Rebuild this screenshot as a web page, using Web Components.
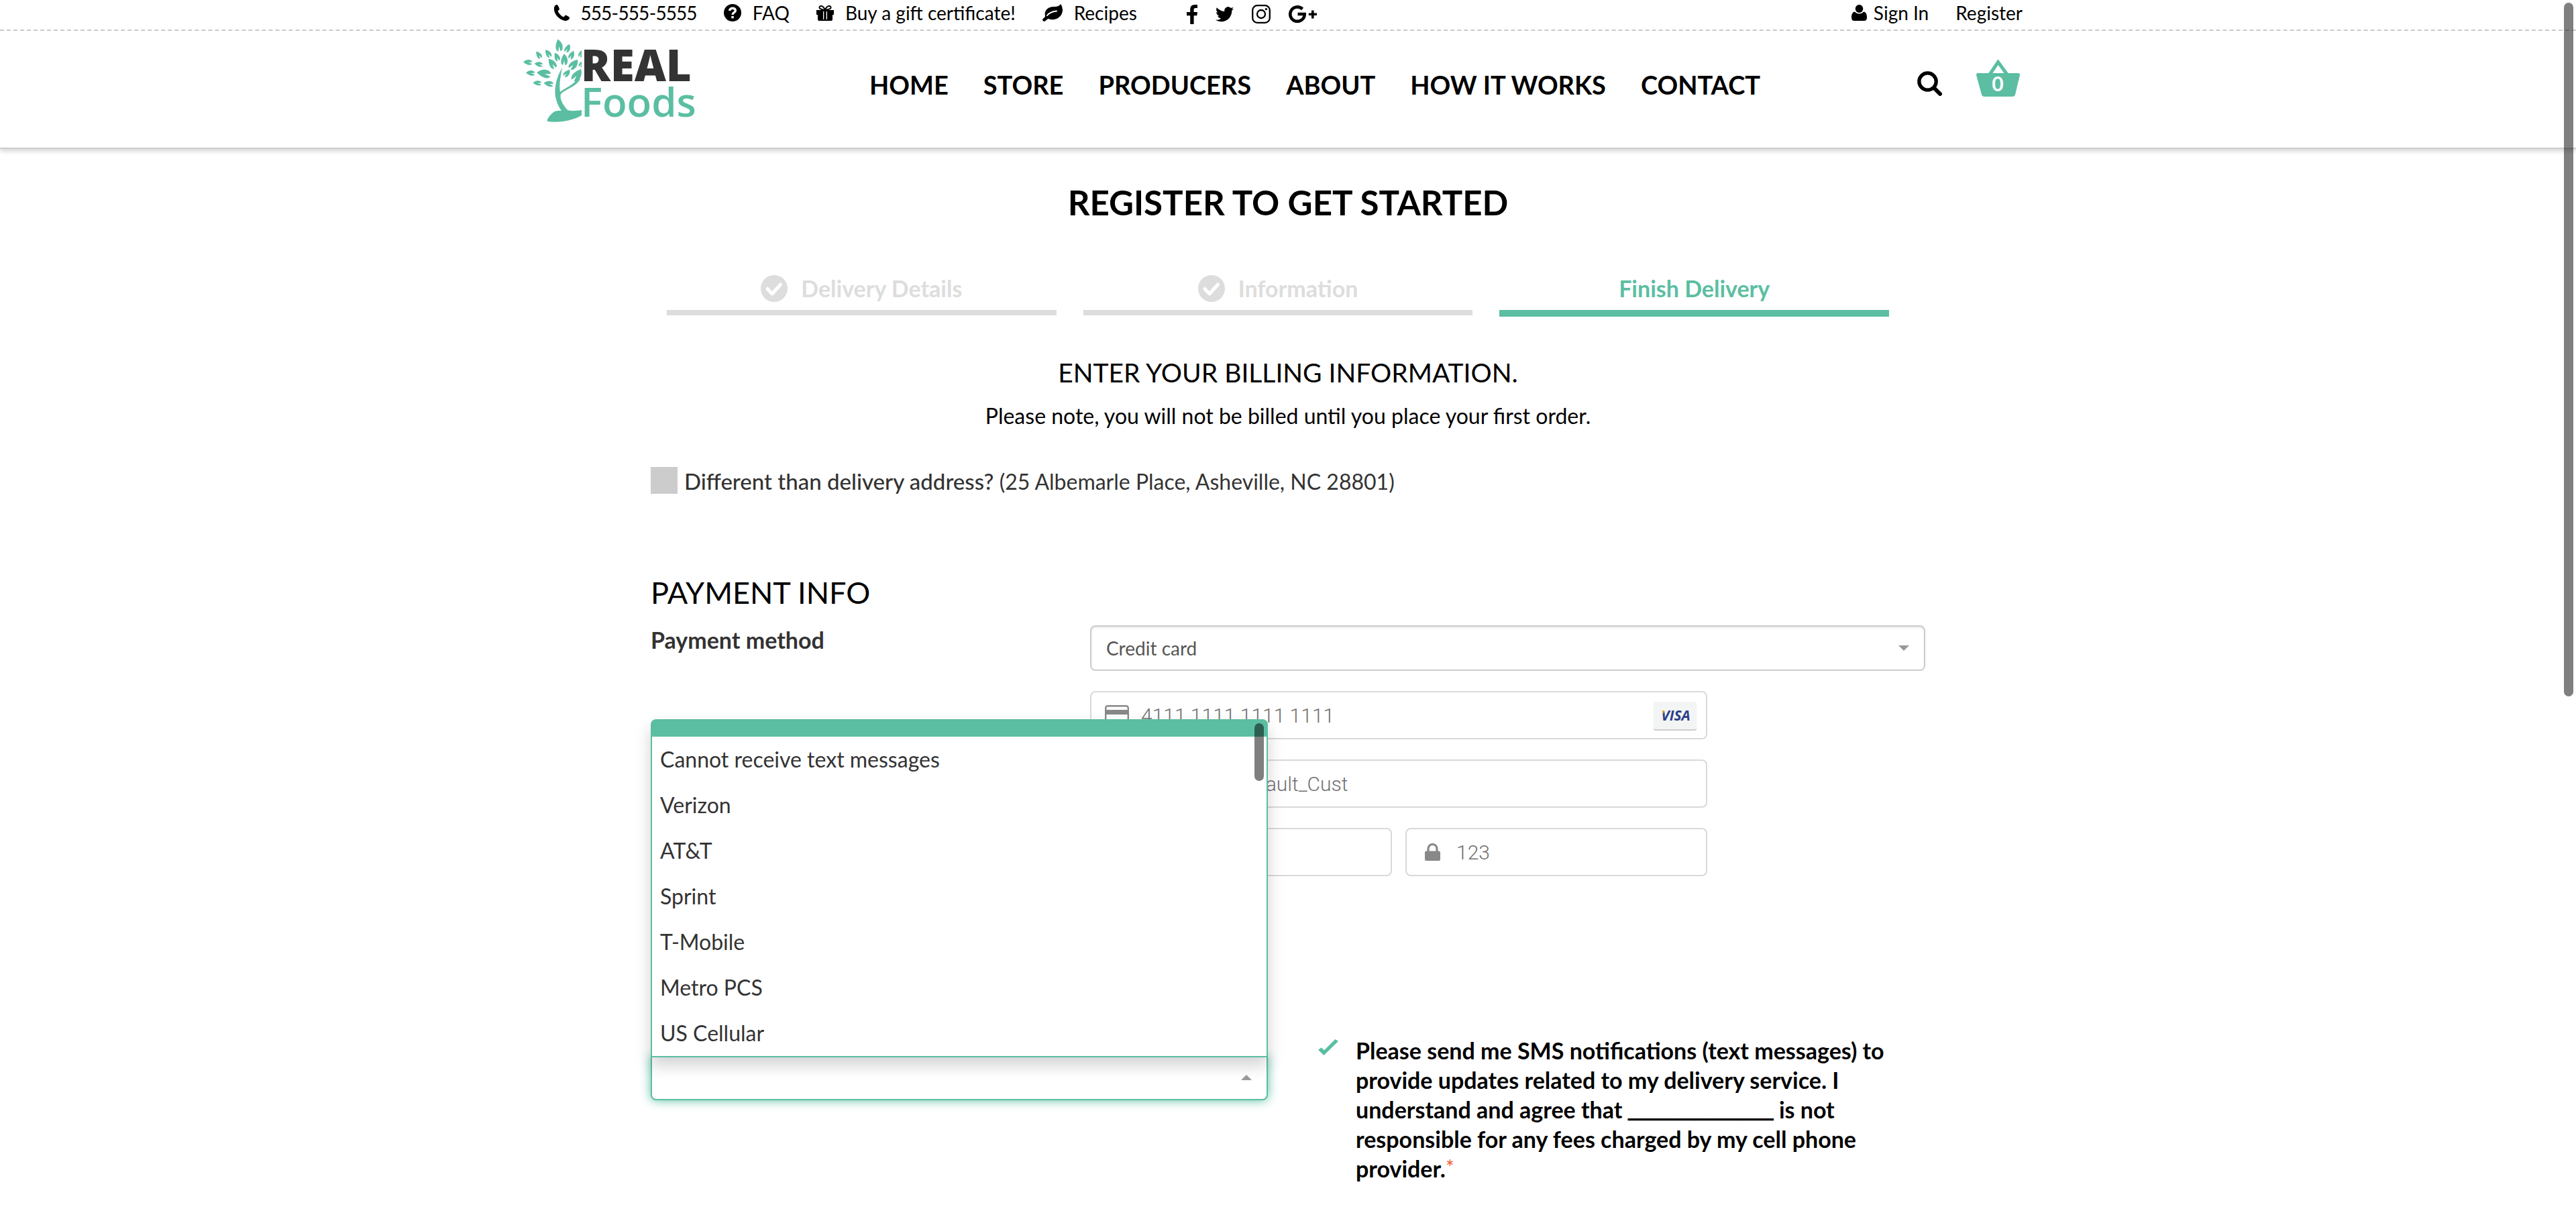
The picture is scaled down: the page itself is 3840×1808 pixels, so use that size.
<!DOCTYPE html>
<html lang="en">
<head>
<meta charset="utf-8">
<title>Real Foods - Register</title>
<style>
  html { --green: #5bbea2; --muted: #ddd; --line: #ccc; --ink: #333; }
  body { margin: 0; background: #fff; color: #000; font-family: Lato, "Open Sans", sans-serif; font-size: 32px; line-height: 44px; overflow: hidden; }
</style>
</head>
<body>
<site-page></site-page>
<script>
const define = (name, html, after) => {
  const template = document.createElement('template');
  template.innerHTML = html;
  customElements.define(name, class extends HTMLElement {
    constructor() {
      super();
      this.attachShadow({ mode: 'open' }).append(template.content.cloneNode(true));
    }
    connectedCallback() { if (after) after(this, this.shadowRoot); }
  });
};

const icons = {
  phone: [24, 24, '<path d="M1 5C0 14 10 24 19 24C23 23 24 21 24 19C22 17 20 16 18 15.500L15 18.500C11 16.500 8 13 6.500 9.500L9 7C8.500 4 7 1.500 5.500 0C3 0 1 2 1 5Z"/>'],
  help: [26, 26, '<circle cx="13" cy="13" r="13"/><path d="M8.500 10C9 5 17.500 5 17.300 10C17 13 13 12.500 13 16" fill="none" stroke="#fff" stroke-width="3.400"/><path d="M11.300 18h3.500v3.300h-3.500z" fill="#fff"/>'],
  gift: [26, 24, '<path d="M0 8h10v7H0zM16 8h10v7H16zM2 15h8v9H4q-2 0-2-2zM16 15h8v7q0 2-2 2h-6zM11.300 9h3.400v13h-3.400z"/><path d="M10 8h6v2h-6zM10 22h6v2h-6z"/><path d="M13 8C10 0 4 1 4.500 4.500C5 7 9 7 13 8C17 7 21 7 21.500 4.500C22 1 16 0 13 8Z" fill="none" stroke="#000" stroke-width="2"/>'],
  leaf: [30, 26, '<path d="M27 0C29 2 30 7 30 10C29 20 18 26 9 22C7 22 5 25 3 26C1 26 0 24 0 23C1 21 4 20 4 18C2 10 8 4 17 4C22 4 25 3 27 0Z"/><path d="M7 17C11 12 15 11 21 10.500" fill="none" stroke="#fff" stroke-width="2" stroke-linecap="round"/>'],
  facebook: [16, 29, '<path d="M16 .3V5h-2.800c-2.200 0-2.600 1-2.600 2.600V11H16l-.7 5.200h-4.700V29H5.200V16.200H0V11h5.200V7C5.200 2.500 8 0 12 0c2 0 3.500.1 4 .3z"/>'],
  twitter: [27, 24, '<path transform="scale(.0528) translate(0 -24)" d="M459.370 151.716c.325 4.548.325 9.097.325 13.645 0 138.720-105.583 298.558-298.558 298.558-59.452 0-114.680-17.219-161.137-47.106 8.447.974 16.568 1.299 25.340 1.299 49.055 0 94.213-16.568 130.274-44.832-46.132-.975-84.792-31.188-98.112-72.772 6.498.974 12.995 1.624 19.818 1.624 9.421 0 18.843-1.300 27.614-3.573-48.081-9.747-84.143-51.980-84.143-102.985v-1.299c13.969 7.797 30.214 12.670 47.431 13.319-28.264-18.843-46.781-51.005-46.781-87.391 0-19.492 5.197-37.360 14.294-52.954 51.655 63.675 129.300 105.258 216.365 109.807-1.624-7.797-2.599-15.918-2.599-24.040 0-57.828 46.782-104.934 104.934-104.934 30.213 0 57.502 12.670 76.670 33.137 23.715-4.548 46.456-13.320 66.599-25.340-7.798 24.366-24.366 44.833-46.132 57.827 21.117-2.273 41.584-8.122 60.426-16.243-14.292 20.791-32.161 39.308-52.628 54.253z"/>'],
  instagram: [28, 28, '<g fill="none" stroke="#000" stroke-width="2.300"><rect x="1.200" y="1.200" width="25.600" height="25.600" rx="7"/><circle cx="14" cy="14" r="6"/></g><circle cx="21.400" cy="6.600" r="1.700"/>'],
  google: [42, 26, '<path d="M20.500 5.500A10.700 10.700 0 1 0 23.700 13H13.500" fill="none" stroke="#000" stroke-width="4.600"/><path d="M34 7.500h3.600v4H42v3.500h-4.400v4.500H34V15h-4.200v-3.500H34z"/>'],
  user: [23, 24, '<ellipse cx="11.500" cy="6" rx="5.800" ry="6"/><path d="M5 10.500C8 14.500 15 14.500 18 10.500C22 11 23 15 23 19C23 22.500 21.500 24 19 24H4C1.500 24 0 22.500 0 19C0 15 1 11 5 10.500Z"/>'],
  search: [37, 37, '<circle cx="15.500" cy="15.500" r="12.700" fill="none" stroke="#000" stroke-width="5.300"/><path d="M25 25l9 9" stroke="#000" stroke-width="6" stroke-linecap="round"/>'],
  done: [40, 40, '<circle cx="20" cy="20" r="20" fill="#ddd"/><path d="M10 20.500l7 7.500L29.500 14" fill="none" stroke="#fff" stroke-width="5" stroke-linecap="round" stroke-linejoin="round"/>'],
  card: [36, 30, '<rect x="1.200" y="1.200" width="33.600" height="27.600" rx="3" fill="none" stroke="#888" stroke-width="2.400"/><path d="M1 7h34v7H1zM5 21h5v2H5zM12 21h6v2h-6z" fill="#888"/>'],
  lock: [23, 26, '<path d="M5 12V8a6.500 6.500 0 0 1 13 0v4" fill="none" stroke="#888" stroke-width="3.200"/><rect y="11.500" width="23" height="14.500" rx="2" fill="#888"/>'],
  calendar: [26, 26, '<rect x="1" y="3" width="24" height="22" rx="3" fill="none" stroke="#888" stroke-width="2.400"/><path d="M1 8h24v3H1z" fill="#888"/>']
};
define('site-icon', '<style>:host{display:block;flex:none}svg{display:block}</style>', (el, root) => {
  const [w, h, body] = icons[el.getAttribute('name')];
  root.innerHTML += `<svg width="${w}" height="${h}" viewBox="0 0 ${w} ${h}" aria-hidden="true">${body}</svg>`;
});

const leaf = (x, y, r, s) => `<path transform="translate(${x} ${y}) rotate(${r}) scale(${s})" d="M0-10C5-5 7 0 5 6C4 8 2.500 9 1.500 9L0 1L-2 9C-7 7-6-2 0-10Z"/>`;
define('site-logo', `
<style>
  :host { display: block; flex: none; width: 260px; }
  a, svg { display: block; }
  .mark { overflow: visible; }
  .real { font: 800 65px "Open Sans", sans-serif; fill: #333; }
  .foods { font: 600 60px "Open Sans", sans-serif; fill: var(--green); }
</style>
<a href="#" aria-label="Real Foods"><svg class="mark" width="260" height="132" viewBox="0 0 260 132">
  <svg width="87" height="132" viewBox="0 0 87 132"><g fill="#5bbea2">
    ${[[53, 10, -8, .95], [66, 14, 25, .7], [23, 24, -35, .65], [37, 22, -35, .7], [50, 27, -25, .7], [72, 24, 25, .7], [61, 31, 0, .9],
       [7, 35, -85, .7], [23, 38, -80, .65], [43, 37, -35, .9], [75, 38, 40, .95], [11, 51, -85, .7], [31, 52, -80, 1.1],
       [65, 51, 40, .7], [80, 54, 35, 1.1], [21, 66, -85, .65], [38, 67, -80, .75], [86, 22, 20, .6], [87, 37, 30, .6]].map(l => leaf(...l)).join('')}
    <path d="M58 43C49 58 46 74 48 86C50 96 54 103 57 107C50 107 47 107 43 111C38 116 35 120 36 123C50 125 72 123 87 114V106C80 107 72 108 66 106C59 98 54 90 56 82C64 74 78 72 85 60L82 58C76 68 64 72 55 79C53 68 56 54 58 43Z"/>
  </g></svg>
  <text class="real" x="86" y="63">REAL</text>
  <text class="foods" x="86" y="116">Foods</text>
</svg></a>`);

define('top-bar', `
<style>
  :host { display: block; font-size: 28px; line-height: 38px; font-variant-numeric: proportional-nums; border-bottom: 2px dashed var(--line); padding-bottom: 6px; }
  .row { max-width: 2190px; margin: 0 auto; display: flex; justify-content: space-between; }
  nav, a { display: flex; align-items: center; }
  nav { gap: 40px; }
  a { color: inherit; text-decoration: none; gap: 17px; white-space: nowrap; }
  .social { display: flex; align-items: center; gap: 27px; padding: 4px 0 0 34px; }
  .user { gap: 10px; }
</style>
<div class="row">
  <nav aria-label="Help">
    <a href="#"><site-icon name="phone"></site-icon>555-555-5555</a>
    <a href="#"><site-icon name="help"></site-icon>FAQ</a>
    <a href="#"><site-icon name="gift"></site-icon>Buy a gift certificate!</a>
    <a href="#"><site-icon name="leaf"></site-icon>Recipes</a>
    <span class="social">
      <a href="#" aria-label="Facebook"><site-icon name="facebook"></site-icon></a>
      <a href="#" aria-label="Twitter"><site-icon name="twitter"></site-icon></a>
      <a href="#" aria-label="Instagram"><site-icon name="instagram"></site-icon></a>
      <a href="#" aria-label="Google Plus"><site-icon name="google"></site-icon></a>
    </span>
  </nav>
  <nav aria-label="Account">
    <a class="user" href="#"><site-icon name="user"></site-icon>Sign In</a>
    <a href="#">Register</a>
  </nav>
</div>`);

define('site-header', `
<style>
  :host { display: block; border-bottom: 2px solid var(--line); box-shadow: 0 4px 6px rgba(0,0,0,.15); padding: 12px 0 30px; }
  .row { max-width: 2280px; margin: 0 auto; display: flex; align-items: center; }
  nav { display: flex; gap: 52px; margin-left: 256px; padding-top: 4px; font-size: 38px; font-weight: 700; line-height: 48px; }
  a { color: inherit; text-decoration: none; white-space: nowrap; }
  .tools { display: flex; align-items: center; gap: 51px; margin-left: auto; padding-right: 49px; }
  button { border: 0; padding: 0; background: none; display: block; }
  .basket text { font: 700 30px Lato, sans-serif; fill: #fff; text-anchor: middle; }
  svg { display: block; }
</style>
<div class="row">
  <site-logo></site-logo>
  <nav aria-label="Main">
    <a href="#">HOME</a><a href="#">STORE</a><a href="#">PRODUCERS</a><a href="#">ABOUT</a><a href="#">HOW IT WORKS</a><a href="#">CONTACT</a>
  </nav>
  <div class="tools">
    <button aria-label="Search"><site-icon name="search"></site-icon></button>
    <a class="basket" href="#" aria-label="Basket"><svg width="65" height="71" viewBox="0 0 65 71">
      <path d="M20 22L32.500 3.500L46 22" fill="none" stroke="#5bbea2" stroke-width="5"/>
      <path d="M2 20H63Q65 20 65 23L58 52Q57 55 54 55H12Q9 55 8 52L0 23Q0 20 2 20Z" fill="#5bbea2"/>
      <text x="32" y="47">0</text>
    </svg></a>
  </div>
</div>`);

define('step-item', `
<style>
  :host { display: flex; flex: 1; justify-content: center; align-items: center; gap: 20px; height: 40px; padding-bottom: 12px; border-bottom: 8px solid var(--muted); color: var(--muted); font-size: 34px; font-weight: 700; }
  :host([current]) { color: var(--green); border-bottom: 10px solid var(--green); }
  :host([current]) site-icon { display: none; }
</style>
<site-icon name="done"></site-icon><span><slot></slot></span>`);

define('step-tracker', `
<style>
  :host { display: flex; align-items: flex-start; gap: 40px; padding: 0 54px 0 24px; }
</style>
<step-item>Delivery Details</step-item><step-item>Information</step-item><step-item current>Finish Delivery</step-item>`);

define('card-field', `
<style>
  :host { display: flex; flex: 1; min-width: 0; align-items: center; box-sizing: border-box; height: 72px; padding: 0 14px 0 20px; border: 2px solid #d9d9d9; border-radius: 8px; gap: 18px; background: #fff; }
  .icon { width: 36px; display: flex; justify-content: center; }
  input { flex: 1; min-width: 0; border: 0; padding: 0; background: none; outline: 0; color: #707070; font: 300 30px Roboto, "Liberation Sans", sans-serif; }
</style>
<span class="icon"></span><input><slot></slot>`, (el, root) => {
  const name = el.getAttribute('icon');
  if (name) root.querySelector('.icon').innerHTML = `<site-icon name="${name}"></site-icon>`;
  const input = root.querySelector('input');
  input.setAttribute('aria-label', el.getAttribute('label'));
  input.setAttribute('value', el.getAttribute('value') || '');
});

define('visa-badge', `
<style>
  :host { display: block; flex: none; width: 64px; height: 41px; background: #f3f5f5; border-radius: 3px; box-shadow: 0 2px 1px #ccc; }
  svg { display: block; }
  text { font: italic 700 21px "Open Sans", sans-serif; text-anchor: middle; }
</style>
<svg width="64" height="41" viewBox="0 0 64 41">
  <defs><linearGradient id="visa" x1="0" y1="0" x2="1" y2="1"><stop offset="0" stop-color="#f0a23c"/><stop offset=".2" stop-color="#e0983c"/><stop offset=".26" stop-color="#2b3f87"/></linearGradient></defs>
  <text x="33" y="28" fill="url(#visa)">VISA</text>
</svg>`);

define('payment-form', `
<style>
  :host { display: flex; color: var(--ink); }
  .name { width: 655px; flex: none; font-size: 34px; font-weight: 700; }
  .fields { flex: 1; min-width: 0; display: flex; flex-direction: column; gap: 30px; }
  .method { position: relative; }
  select { appearance: none; display: block; width: 100%; height: 68px; padding: 0 22px; border: 2px solid var(--line); border-radius: 8px; background: #fff; box-shadow: inset 0 2px 3px rgba(0,0,0,.09); font: 400 28px Lato, sans-serif; color: #555; }
  .method::after { content: ""; position: absolute; right: 24px; top: 30px; border: 8px solid transparent; border-top-color: #999; border-bottom: 0; }
  .card { display: flex; flex-direction: column; gap: 30px; max-width: 920px; }
  .card > * { flex: none; }
  .pair { display: flex; gap: 20px; }
</style>
<label class="name" for="method">Payment method</label>
<div class="fields">
  <div class="method"><select id="method"><option>Credit card</option></select></div>
  <div class="card">
    <card-field icon="card" label="Card number" value="4111 1111 1111 1111"><visa-badge></visa-badge></card-field>
    <card-field label="Name on card" value="Firstname Default_Cust"></card-field>
    <div class="pair"><card-field icon="calendar" label="Expiration"></card-field><card-field icon="lock" label="Security code" value="123"></card-field></div>
  </div>
</div>`);

define('carrier-select', `
<style>
  :host { display: block; position: relative; color: var(--ink); }
  select { appearance: none; display: block; width: 100%; height: 66px; border: 2px solid var(--green); border-radius: 0 0 8px 8px; background: #fff; box-shadow: 0 0 16px #5bbea2; }
  .arrow { position: absolute; right: 24px; top: 28px; border: 8px solid transparent; border-bottom-color: #999; border-top: 0; }
  .list { position: absolute; left: 0; right: 0; bottom: calc(100% - 2px); border: 2px solid var(--green); border-radius: 8px 8px 0 0; background: #fff; box-shadow: 0 12px 24px rgba(0,0,0,.18); }
  ul { list-style: none; margin: 0; padding: 0; }
  li { padding: 12px; line-height: 44px; }
  li:first-child { height: 24px; padding: 0; background: var(--green); }
  .thumb { position: absolute; right: 4px; top: 4px; width: 14px; height: 86px; border-radius: 7px; background: rgba(0,0,0,.5); }
</style>
<select aria-label="Cell phone provider"><option></option></select>
<div class="list">
  <ul role="listbox" aria-label="Cell phone provider">
    <li role="option" aria-selected="true"></li>
    <li role="option">Cannot receive text messages</li>
    <li role="option">Verizon</li>
    <li role="option">AT&amp;T</li>
    <li role="option">Sprint</li>
    <li role="option">T-Mobile</li>
    <li role="option">Metro PCS</li>
    <li role="option">US Cellular</li>
  </ul>
  <div class="thumb"></div>
</div>
<div class="arrow"></div>`);

define('sms-consent', `
<style>
  :host { display: flex; align-items: flex-start; gap: 26px; font-size: 34px; font-weight: 700; }
  input { appearance: none; flex: none; margin: 5px 0 0; width: 30px; height: 24px; background: var(--green); clip-path: polygon(0 66%, 16% 52%, 30% 68%, 85% 0, 100% 13%, 28% 100%); }
  .blank { font-family: "Liberation Sans", sans-serif; font-size: 30px; line-height: 0; text-shadow: 0 -1px #000, 0 -2px #000; }
  sup { color: #f1592a; font-size: 30px; font-weight: 400; line-height: 0; vertical-align: 4px; }
</style>
<input type="checkbox" id="sms" checked>
<label for="sms">Please send me SMS notifications (text messages) to<br>provide updates related to my delivery service. I<br>understand and agree that <span class="blank">_____________</span> is not<br>responsible for any fees charged by my cell phone<br>provider.<sup>*</sup></label>`);

define('register-page', `
<style>
  :host { display: block; max-width: 1900px; margin: 0 auto; }
  h1, h2, p, h3 { margin: 0; text-align: center; }
  h1 { font-size: 51px; line-height: 60px; padding: 50px 0 78px; }
  h2 { font-size: 39px; font-weight: 400; line-height: 48px; margin-top: 59px; }
  p { margin-top: 19px; }
  .address { display: flex; gap: 10px; margin-top: 54px; color: var(--ink); }
  .address input { appearance: none; margin: 0; width: 40px; height: 40px; background: #ccc; }
  .address b { font-size: 33px; font-weight: 500; line-height: 0; }
  h3 { font-size: 45px; font-weight: 400; line-height: 56px; text-align: left; margin: 115px 0 21px; }
  .notify { display: flex; align-items: flex-start; gap: 75px; margin-top: 238px; }
  carrier-select { flex: 0 1 920px; margin-top: 30px; }
  sms-consent { flex: 1; }
</style>
<h1>REGISTER TO GET STARTED</h1>
<step-tracker></step-tracker>
<h2>ENTER YOUR BILLING INFORMATION.</h2>
<p>Please note, you will not be billed until you place your first order.</p>
<div class="address"><input type="checkbox" id="differs"><label for="differs"><b>Different than delivery address?</b> (25 Albemarle Place, Asheville, NC 28801)</label></div>
<h3>PAYMENT INFO</h3>
<payment-form></payment-form>
<div class="notify"><carrier-select></carrier-select><sms-consent></sms-consent></div>`);

define('site-page', `
<style>
  :host { display: block; }
  .scroll { position: fixed; right: 4px; top: 4px; width: 14px; height: 1034px; border-radius: 7px; background: rgba(0,0,0,.5); }
</style>
<top-bar></top-bar><site-header></site-header><register-page></register-page><div class="scroll"></div>`);
</script>
</body>
</html>
